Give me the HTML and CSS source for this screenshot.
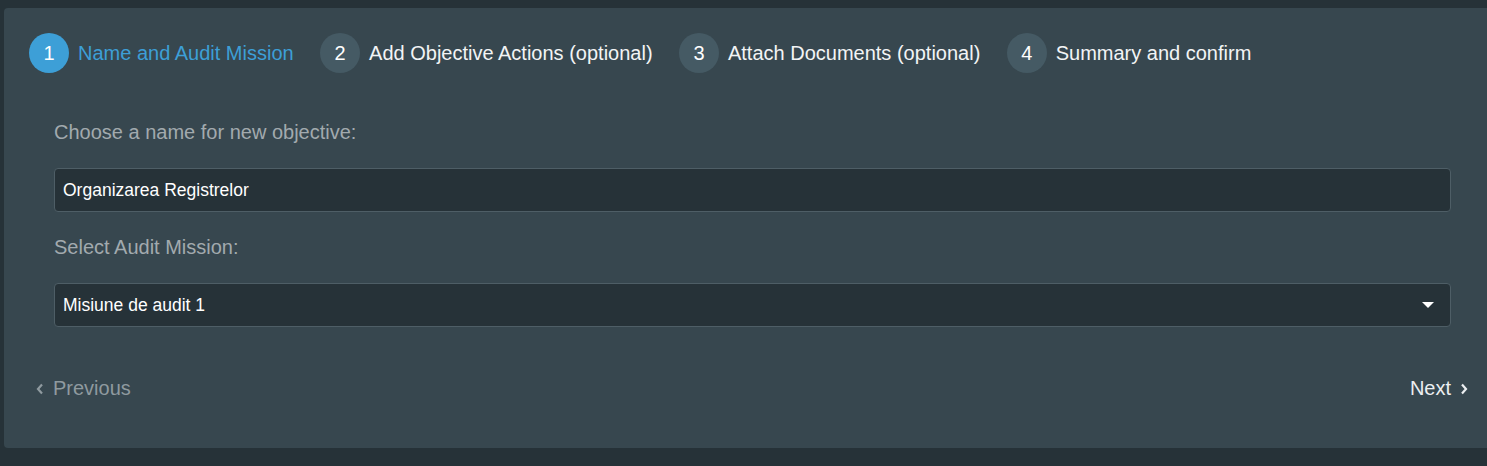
FILE: index.html
```html
<!DOCTYPE html>
<html>
<head>
<meta charset="utf-8">
<link rel="stylesheet" href="styles.css">
</head>
<body>
<div class="card">
  <div class="steps">
    <div class="step active"><span class="num">1</span><span class="title">Name and Audit Mission</span></div>
    <div class="step"><span class="num">2</span><span class="title">Add Objective Actions (optional)</span></div>
    <div class="step"><span class="num">3</span><span class="title">Attach Documents (optional)</span></div>
    <div class="step"><span class="num">4</span><span class="title">Summary and confirm</span></div>
  </div>
  <div class="form">
    <label class="label">Choose a name for new objective:</label>
    <div class="field">Organizarea Registrelor</div>
    <label class="label">Select Audit Mission:</label>
    <div class="field select">Misiune de audit 1
      <svg class="caret" width="12" height="6" viewBox="0 0 12 6"><path d="M0 0h12L6 6z" fill="#fff"/></svg>
    </div>
  </div>
  <div class="nav">
    <span class="btn prev"><svg width="8" height="12" viewBox="0 0 8 12"><path d="M6 1.5L2 6l4 4.5" fill="none" stroke="currentColor" stroke-width="2.2"/></svg>Previous</span>
    <span class="btn next">Next<svg width="8" height="12" viewBox="0 0 8 12"><path d="M2 1.5L6 6l-4 4.5" fill="none" stroke="currentColor" stroke-width="2.2"/></svg></span>
  </div>
</div>
</body>
</html>
```

FILE: styles.css
```css
html, body {
  margin: 0;
  padding: 0;
  background: #263238;
  overflow: hidden;
}
body {
  font-family: "Liberation Sans", Arial, sans-serif;
  height: 466px;
}
.card {
  margin: 8px -6px 0 4px;
  height: 440px;
  background: #37474f;
  border-radius: 4px;
  box-sizing: border-box;
  padding-top: 25px;
}
.steps {
  display: flex;
  align-items: center;
  padding-left: 25px;
}
.step {
  display: flex;
  align-items: center;
  margin-right: 26.4px;
}
.num {
  width: 40px;
  height: 40px;
  border-radius: 50%;
  background: #455a64;
  color: #fff;
  font-size: 20px;
  display: flex;
  align-items: center;
  justify-content: center;
  margin-right: 9px;
}
.title {
  color: #f2f4f5;
  font-size: 20px;
}
.step.active .num {
  background: #3d9fd7;
}
.step.active .title {
  color: #3d9fd7;
}
.form {
  display: flex;
  flex-direction: column;
  padding: 48px 42px 0 50px;
}
.label {
  color: #a2aaae;
  font-size: 20px;
  line-height: 23px;
  margin-bottom: 24px;
}
.field {
  height: 44px;
  box-sizing: border-box;
  background: #263238;
  border: 1px solid #4e5e66;
  border-radius: 4px;
  color: #fff;
  font-size: 17.5px;
  display: flex;
  align-items: center;
  padding: 0 8px;
  margin-bottom: 24px;
}
.select {
  justify-content: space-between;
  padding-right: 16px;
}
.caret {
  display: block;
}
.nav {
  display: flex;
  justify-content: space-between;
  align-items: center;
  padding: 26px 25px 0 32px;
  line-height: 23px;
}
.btn {
  display: flex;
  align-items: center;
  font-size: 20px;
  gap: 9px;
}
.prev {
  color: #8f9a9f;
}
.next {
  color: #eceff1;
}
.btn svg {
  display: block;
}
```
